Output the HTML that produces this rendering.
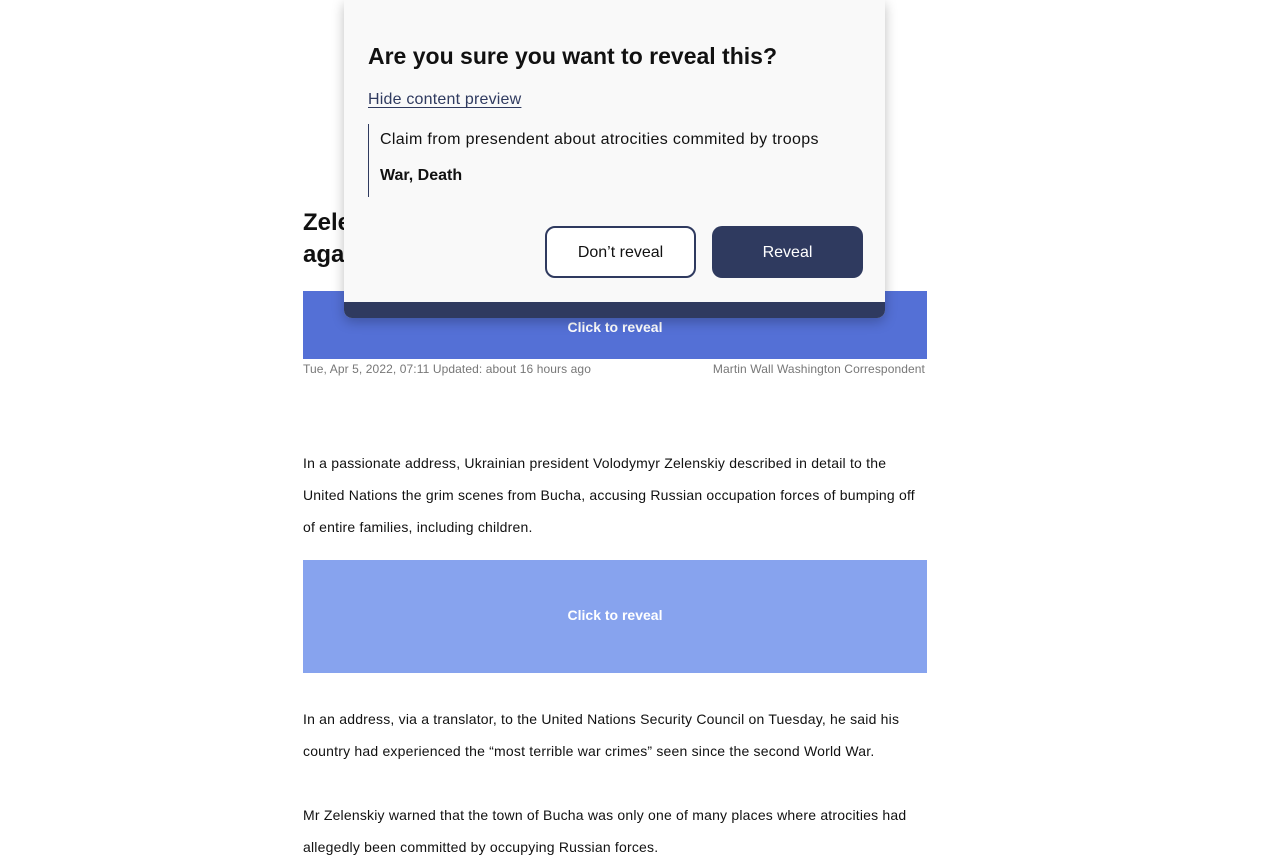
<!DOCTYPE html>
<html><head><meta charset="utf-8"><style>
body{margin:0;background:#fff;font-family:"Liberation Sans",Arial,sans-serif;color:#111;width:1280px;height:852px;overflow:hidden;position:relative}
.a{position:absolute}
h1{position:absolute;left:303px;top:207px;margin:0;font-size:24px;line-height:32px;font-weight:bold;width:624px}
.blk{position:absolute;left:303px;width:624px;color:#fff;font-size:14px;font-weight:bold;display:flex;align-items:center;justify-content:center;box-sizing:border-box}
.meta{position:absolute;top:362px;font-size:12px;color:#777;letter-spacing:0.1px}
p{position:absolute;left:303px;width:624px;margin:0;font-size:14px;line-height:32px;letter-spacing:0.2px}
.modal{position:absolute;left:344px;top:0;width:541px;height:318px;background:#f9f9f9;border-radius:0 0 8px 8px;box-shadow:0 4px 12px rgba(0,0,0,.25);overflow:hidden}
.bar{position:absolute;left:0;bottom:0;width:100%;height:16px;background:#2f3a5f}
.btn{position:absolute;top:226px;width:151px;height:52px;box-sizing:border-box;border-radius:10px;font-size:16px;display:flex;align-items:center;justify-content:center;padding-top:2px}
</style></head><body>
<h1>Zelenskiy calls for action<br>against Russia</h1>
<div class="blk" style="top:291px;height:68px;background:#5470d6;padding-top:3px">Click to reveal</div>
<div class="meta" style="left:303px">Tue, Apr 5, 2022, 07:11 Updated: about 16 hours ago</div>
<div class="meta" style="right:355px">Martin Wall Washington Correspondent</div>
<p style="top:447px">In a passionate address, Ukrainian president Volodymyr Zelenskiy described in detail to the United Nations the grim scenes from Bucha, accusing Russian occupation forces of bumping off of entire families, including children.</p>
<div class="blk" style="top:560px;height:113px;background:#87a3ee;padding-bottom:4px">Click to reveal</div>
<p style="top:703px">In an address, via a translator, to the United Nations Security Council on Tuesday, he said his country had experienced the “most terrible war crimes” seen since the second World War.</p>
<p style="top:799px">Mr Zelenskiy warned that the town of Bucha was only one of many places where atrocities had allegedly been committed by occupying Russian forces.</p>
<div class="modal">
<div class="a" style="left:24px;top:40px;font-size:23px;font-weight:bold;line-height:32px">Are you sure you want to reveal this?</div>
<div class="a" style="left:24px;top:91px;font-size:16px;color:#2f3a5f;text-decoration:underline;text-underline-offset:3px;letter-spacing:0.2px">Hide content preview</div>
<div class="a" style="left:24px;top:124px;height:73px;border-left:1px solid #2f3a5f"></div>
<div class="a" style="left:36px;top:131px;font-size:16px;letter-spacing:0.35px">Claim from presendent about atrocities commited by troops</div>
<div class="a" style="left:36px;top:167px;font-size:16px;font-weight:bold">War, Death</div>
<div class="btn" style="left:201px;border:2px solid #2f3a5f;background:#fff;color:#111">Don’t reveal</div>
<div class="btn" style="left:368px;background:#2f3a5f;color:#fff">Reveal</div>
<div class="bar"></div>
</div>
</body></html>
